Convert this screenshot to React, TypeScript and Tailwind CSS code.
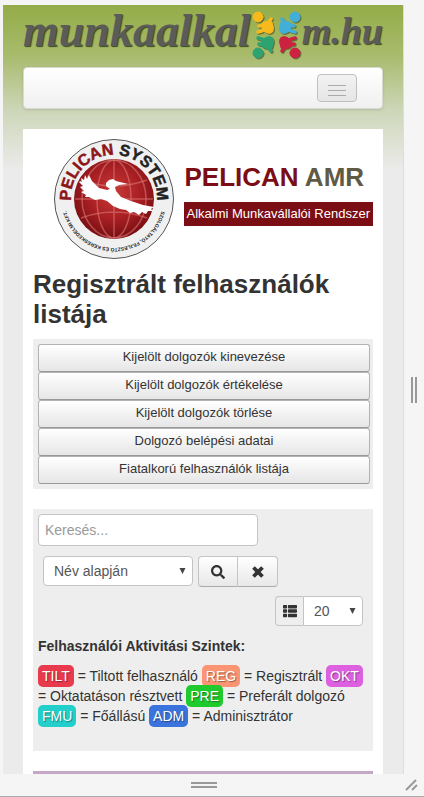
import React from 'react';
import { FaSearch, FaThList } from 'react-icons/fa';
import { X } from 'lucide-react';

const actions = [
    'Kijelölt dolgozók kinevezése',
    'Kijelölt dolgozók értékelése',
    'Kijelölt dolgozók törlése',
    'Dolgozó belépési adatai',
    'Fiatalkorú felhasználók listája',
];

const levels = [
    { code: 'TILT', label: 'Tiltott felhasználó', color: 'bg-[#e8394d]' },
    { code: 'REG', label: 'Regisztrált', color: 'bg-[#fa9472]' },
    { code: 'OKT', label: 'Oktatatáson résztvett', color: 'bg-[#dd60e0]' },
    { code: 'PRE', label: 'Preferált dolgozó', color: 'bg-[#1fca2c]' },
    { code: 'FMU', label: 'Főállású', color: 'bg-[#22cfca]' },
    { code: 'ADM', label: 'Adminisztrátor', color: 'bg-[#3b73dc]' },
];

// one figure per corner, mirrored around the middle of the mark
const figures = [
    { color: '#f8b91c', transform: '' },
    { color: '#42afd8', transform: 'translate(49 0) scale(-1 1)' },
    { color: '#2da372', transform: 'translate(0 48) scale(1 -1)' },
    { color: '#cc2140', transform: 'translate(49 48) scale(-1 -1)' },
];

const Caret: React.FC = () => (
    <svg className="pointer-events-none absolute right-[7px] top-3 h-1.5 w-[7px]" viewBox="0 0 7 6" fill="#444" aria-hidden="true">
        <path d="M0.5 0h6L3.5 6z" />
    </svg>
);

const PeopleMark: React.FC = () => (
    <svg className="mt-1.5 h-12 w-[49px] shrink-0 drop-shadow-[1px_1px_0px_#00000066]" viewBox="0 0 49 48" aria-hidden="true">
        {figures.map(({ color, transform }) => (
            <g key={color} fill={color} stroke={color} strokeLinecap="round" transform={transform}>
                <circle cx="6" cy="6" r="5" />
                <ellipse cx="15.500" cy="16.500" rx="6.500" ry="5" transform="rotate(45 15.500 16.500)" />
                <path fill="none" strokeWidth="3.500" d="M19 8l-2 3-4 3-6 1M6 21l4-1 3-2M19 12l1 5" />
            </g>
        ))}
    </svg>
);

const PelicanSeal: React.FC = () => (
    <svg className="size-30 shrink-0" viewBox="0 0 120 120" role="img" aria-label="Pelican System">
        <defs>
            <radialGradient id="globe" cx="50%" cy="42%" r="55%">
                <stop offset="0" stopColor="#c93a39" />
                <stop offset="0.6" stopColor="#a81f23" />
                <stop offset="1" stopColor="#7b1014" />
            </radialGradient>
            <path id="arc-top" d="M17.600 66A43 43 0 1 1 102.400 66" />
            <path id="arc-bottom" d="M109 60A49 49 0 0 1 11 60" />
        </defs>
        <circle cx="60" cy="60" r="59.500" fill="#f0f0f0" stroke="#555" />
        <circle cx="60" cy="60" r="40" fill="url(#globe)" />
        <g fill="none" stroke="#dc7773" strokeOpacity="0.6" strokeWidth="1.500">
            <ellipse cx="60" cy="60" rx="17" ry="39" />
            <ellipse cx="60" cy="60" rx="32" ry="39" />
            <path d="M60 21v78M21 60h78M27 41q33 12 66 0M27 79q33-12 66 0" />
        </g>
        <path
            fill="#fff"
            d="M25 42l3 1-1-4 3 2 1-5 2 4 2-4 3 6 7 7 8 2 3-1-4-3 0-3 3-3 4-1 3 2 12 3-9 1-4 2 1 4 5 6 10 4 12 4 11 2-3 2 2 2-5 0-2 3-4-2-3 3-5-3-4 1-4-3-6-1-7-3-6-5-6-2-6 1-6-3-4 0 1-2-5-3 3-1-4-4 3-1-4-4 3-1z"
        />
        <text className="font-['Liberation_Sans'] text-[16px] font-bold" fill="#8d1519" stroke="#8d1519" strokeWidth="0.5">
            <textPath href="#arc-top" startOffset="50%" textAnchor="middle">
                PELICAN <tspan fill="#222" stroke="#222">SYSTEM</tspan>
            </textPath>
        </text>
        <text className="font-['Liberation_Sans'] text-[5px] font-bold" fill="#222">
            <textPath href="#arc-bottom" startOffset="50%" textAnchor="middle">
                SZOLGÁLTATÓ, FEJLESZTŐ ÉS KERESKEDELMI KFT.
            </textPath>
        </text>
    </svg>
);

const SiteHeader: React.FC = () => (
    <header>
        <a href="#" className="flex h-[62px] items-start justify-between font-['Liberation_Serif'] leading-[52px] font-bold italic text-[#5b5c5a]">
            <span className="text-[46px] text-shadow-[1px_1px_1px_#3b4a1c]">munkaalkal</span>
            <PeopleMark />
            <span className="text-[38px] text-shadow-[1px_1px_1px_#3b4a1c]">m.hu</span>
        </a>
        <nav className="flex h-[42px] items-center justify-end rounded-sm border border-[#d8dbd2] bg-linear-to-b from-white to-[#f0f0f0] pr-[25px] shadow-sm">
            <button type="button" aria-label="Menü" className="flex h-7 w-10 flex-col items-center justify-center gap-1 rounded-sm border border-[#c0c0c0] bg-linear-to-b from-[#f2f2f2] to-[#e6e6e6] pt-1">
                <span className="h-px w-[18px] bg-[#aaa]" />
                <span className="h-px w-[18px] bg-[#aaa]" />
                <span className="h-px w-[18px] bg-[#aaa]" />
            </button>
        </nav>
    </header>
);

const Brand: React.FC = () => (
    <div className="flex justify-end gap-2.5">
        <PelicanSeal />
        <div className="pt-[23px]">
            <p className="text-[26px] leading-[30px] font-bold text-[#7b0d14]">
                PELICAN <span className="text-[#5f5a45]">AMR</span>
            </p>
            <p className="mt-2.5 bg-[#7b0d14] pr-[3px] pl-0.5 text-[13px] leading-6 whitespace-nowrap text-white">Alkalmi Munkavállalói Rendszer</p>
        </div>
    </div>
);

const SearchPanel: React.FC = () => (
    <form className="mt-5 bg-[#eee] px-[5px] pt-[5px] pb-[25px]" onSubmit={(e) => e.preventDefault()}>
        <input type="text" aria-label="Keresés" placeholder="Keresés..." className="block h-8 w-[220px] rounded-sm border border-[#c4c4c4] bg-white px-1.5 text-sm placeholder:text-[#999]" />
        <div className="mt-2.5 flex pl-[5px]">
            <div className="relative">
                <select aria-label="Rendezés" className="h-[30px] w-[150px] appearance-none rounded-sm border border-[#c4c4c4] bg-white pl-2.5 text-sm text-[#555]">
                    <option>Név alapján</option>
                </select>
                <Caret />
            </div>
            <button type="submit" aria-label="Keresés indítása" className="ml-[5px] flex h-[31px] w-10 items-center justify-center rounded-l-sm border border-[#c4c4c4] border-b-[#aaa] bg-linear-to-b from-white to-[#e8e8e8]">
                <FaSearch size={14} />
            </button>
            <button type="reset" aria-label="Törlés" className="flex h-[31px] w-10 items-center justify-center rounded-r-sm border border-l-0 border-[#c4c4c4] border-b-[#aaa] bg-linear-to-b from-white to-[#e8e8e8]">
                <X size={18} strokeWidth={5} strokeLinecap="butt" />
            </button>
        </div>
        <div className="mt-[9px] flex justify-end pr-[5px]">
            <span className="flex h-[30px] w-7 items-center justify-center rounded-l-sm border border-r-0 border-[#c4c4c4] bg-[#eee]">
                <FaThList size={14} />
            </span>
            <div className="relative">
                <select aria-label="Sorok száma" className="h-[30px] w-[60px] appearance-none rounded-r-sm border border-[#c4c4c4] bg-white pl-2.5 text-sm text-[#555]">
                    <option>20</option>
                </select>
                <Caret />
            </div>
        </div>
        <p className="mt-2.5 text-sm leading-5 font-bold">Felhasználói Aktivitási Szintek:</p>
        <p className="mt-2.5 text-sm leading-5">
            {levels.map((level) => (
                <React.Fragment key={level.code}>
                    <span className={`rounded-[5px] px-1 py-[3px] text-white text-shadow-[1px_1px_1px_#00000066] ${level.color}`}>{level.code}</span>
                    {` = ${level.label} `}
                </React.Fragment>
            ))}
        </p>
    </form>
);

const App: React.FC = () => (
    <div className="flex h-screen flex-col bg-[#f5f5f5] pt-[5px] font-['Liberation_Sans',Arial,sans-serif] text-[#333]">
        <div className="flex min-h-0 flex-1 pl-[3px]">
            <div className="min-w-0 flex-1 overflow-hidden bg-[#ebebeb] bg-[linear-gradient(#93ac48_0px,#a8bb6c_50px,#cdd6b8_105px,#ebebeb_165px)] px-5">
                <SiteHeader />
                <main className="mt-5 bg-white p-2.5">
                    <Brand />
                    <h1 className="mt-2.5 text-[26px] leading-[30px] font-bold">Regisztrált felhasználók listája</h1>
                    <div className="mt-2.5 bg-[#eee] p-[5px] pr-[3px]">
                        {actions.map((action) => (
                            <button key={action} type="button" className="block h-7 w-full rounded-[3px] border border-[#b3b3b3] border-b-[#999] bg-linear-to-b from-white to-[#e6e6e6] pb-0.5 text-[13px]">
                                {action}
                            </button>
                        ))}
                    </div>
                    <SearchPanel />
                    <div className="mt-5 h-10 bg-[#c4a8c6]" />
                </main>
            </div>
            <div className="flex w-[21px] items-center justify-center gap-0.5 border-l border-[#ddd]">
                <span className="h-[26px] w-0.5 bg-[#999]" />
                <span className="h-[26px] w-0.5 bg-[#999]" />
            </div>
        </div>
        <div className="flex h-[23px] items-center border-b border-[#aaa] pl-[3px]">
            <div className="flex flex-1 flex-col items-center gap-0.5">
                <span className="h-0.5 w-[26px] bg-[#999]" />
                <span className="h-0.5 w-[26px] bg-[#999]" />
            </div>
            <svg className="mr-1 size-4" viewBox="0 0 16 16" stroke="#999" strokeWidth="2" aria-hidden="true">
                <path d="M2 13L12 3M8 13l5-5" />
            </svg>
        </div>
    </div>
);

export default App;
